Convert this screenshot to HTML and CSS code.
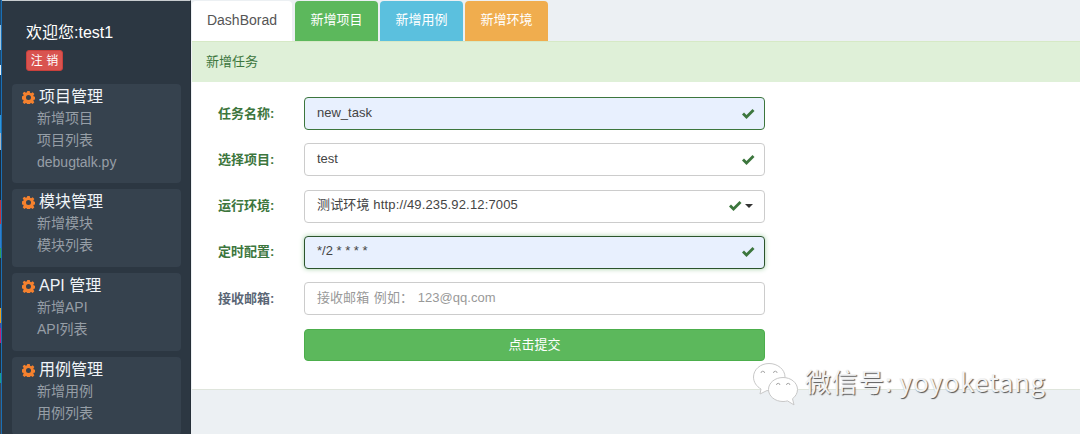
FILE: index.html
```html
<!DOCTYPE html>
<html lang="zh">
<head>
<meta charset="utf-8">
<title>新增任务</title>
<link rel="stylesheet" href="styles.css">
</head>
<body>
<div class="app">
  <div class="edge">
    <i class="e1"></i><i class="e2"></i><i class="e3"></i><i class="e4"></i><i class="e5"></i><i class="e6"></i><i class="e7"></i><i class="e8"></i><i class="e9"></i><i class="e10"></i><i class="e11"></i><i class="e12"></i><i class="e13"></i><i class="e14"></i><i class="e15"></i><i class="e16"></i><i class="e17"></i><i class="e18"></i>
  </div>
  <aside class="sidebar">
    <div class="welcome">欢迎您:test1</div>
    <div class="badge-row"><span class="logout">注 销</span></div>
    <section class="group first">
      <h3><svg class="gear" viewBox="0 0 14 14"><use href="#gear"/></svg>项目管理</h3>
      <a>新增项目</a><a>项目列表</a><a>debugtalk.py</a>
    </section>
    <section class="group">
      <h3><svg class="gear" viewBox="0 0 14 14"><use href="#gear"/></svg>模块管理</h3>
      <a>新增模块</a><a>模块列表</a>
    </section>
    <section class="group">
      <h3><svg class="gear" viewBox="0 0 14 14"><use href="#gear"/></svg>API 管理</h3>
      <a>新增API</a><a>API列表</a>
    </section>
    <section class="group">
      <h3><svg class="gear" viewBox="0 0 14 14"><use href="#gear"/></svg>用例管理</h3>
      <a>新增用例</a><a>用例列表</a>
    </section>
  </aside>
  <main class="main">
    <nav class="tabs">
      <a class="tab dash">DashBorad</a>
      <a class="tab green">新增项目</a>
      <a class="tab blue">新增用例</a>
      <a class="tab orange">新增环境</a>
    </nav>
    <div class="panel">
      <div class="panel-head">新增任务</div>
      <form class="form">
        <div class="row">
          <label class="ok">任务名称:</label>
          <div class="field filled focus"><span class="val">new_task</span><svg class="check" viewBox="0 0 14 12"><use href="#check"/></svg></div>
        </div>
        <div class="row">
          <label class="ok">选择项目:</label>
          <div class="field"><span class="val">test</span><svg class="check" viewBox="0 0 14 12"><use href="#check"/></svg></div>
        </div>
        <div class="row">
          <label class="ok">运行环境:</label>
          <div class="field"><span class="val wide">测试环境 http://49.235.92.12:7005</span><svg class="check near" viewBox="0 0 14 12"><use href="#check"/></svg><span class="caret"></span></div>
        </div>
        <div class="row">
          <label class="ok">定时配置:</label>
          <div class="field filled glow"><span class="val">*/2 * * * *</span><svg class="check" viewBox="0 0 14 12"><use href="#check"/></svg></div>
        </div>
        <div class="row">
          <label class="plain">接收邮箱:</label>
          <div class="field empty"><span class="val">接收邮箱 例如： 123@qq.com</span></div>
        </div>
        <div class="row">
          <span class="spacer"></span>
          <button class="submit" type="button">点击提交</button>
        </div>
      </form>
    </div>
  </main>
</div>
<div class="mark">
  <svg class="wechat" viewBox="0 0 50 44">
    <path class="bub" d="M17 1.500C8.500 1.500 1.500 7.500 1.500 15c0 5 3 9.500 7.500 12l-1 5 7-3.500c1 .2 1.500.2 2 .2 9 0 16-6 16-13.700S25.500 1.500 17 1.500z"/>
    <path class="bub" d="M31 15.500c-8 0-14.500 5.300-14.500 12S23 39.500 31 39.500c1.500 0 3-.2 4.500-.6l6.500 4-1.500-6.200c3-2.200 5-5.500 5-9.200 0-6.700-6.500-12-14.500-12z"/>
    <path class="eye" d="M9 11a1.800 1.800 0 1 1 3.600 0M21.500 11a1.800 1.800 0 1 1 3.600 0M24.500 23a1.700 1.700 0 1 1 3.400 0M34.500 23a1.700 1.700 0 1 1 3.400 0"/>
  </svg>
  <span class="mark-text">微信号: yoyoketang</span>
</div>
<svg class="defs" width="0" height="0">
  <defs>
    <path id="gear" fill-rule="evenodd" d="M5.700 0h2.600l.4 2 1.100.5 1.700-1.100 1.800 1.800-1.100 1.700.5 1.100 2 .4v2.600l-2 .4-.5 1.100 1.100 1.700-1.800 1.800-1.700-1.100-1.100.5-.4 2H5.700l-.4-2-1.100-.5-1.700 1.100-1.800-1.800 1.100-1.700-.5-1.100-2-.4V5.700l2-.4.5-1.100-1.100-1.700 1.800-1.800 1.700 1.100 1.100-.5zM7 4.300a2.700 2.700 0 1 0 0 5.400 2.700 2.700 0 0 0 0-5.400z"/>
    <path id="check" d="M1 6.500l2-2 2.500 2.500L11.500 1 13.500 3 5.500 11z"/>
  </defs>
</svg>
</body>
</html>
```
FILE: styles.css
```css
* { box-sizing: border-box; }
html, body { margin: 0; padding: 0; height: 434px; overflow: hidden; }
body { font-family: "Liberation Sans", "Noto Sans CJK SC", sans-serif; font-size: 13px; color: #333; background: #ecf0f3; }
.app { display: flex; height: 434px; }
.edge { width: 2px; display: flex; flex-direction: column; border-right: 1px solid #1a6fb5; flex: none; }
.edge i { display: block; }
.e1 { height: 25px; background: #1d4a70; }
.e2 { height: 25px; background: #9fc4de; }
.e3 { height: 15px; background: #1d4a70; }
.e4 { height: 10px; background: #e4ecf2; }
.e5 { height: 40px; background: #163a5c; }
.e6 { height: 18px; background: #2e97dc; }
.e7 { height: 17px; background: #a8b4bf; }
.e8 { height: 50px; background: #1c2b3a; }
.e9 { height: 24px; background: #c4333c; }
.e10 { height: 24px; background: #2f7fd0; }
.e11 { height: 10px; background: #2e9e58; }
.e12 { height: 50px; background: #24303c; }
.e13 { height: 15px; background: #e8a020; }
.e14 { height: 5px; background: #4a4aa0; }
.e15 { height: 15px; background: #c0207a; }
.e16 { height: 30px; background: #22303c; }
.e17 { height: 10px; background: #17a08c; }
.e18 { height: 51px; background: #3a4654; }
.sidebar { width: 189px; flex: none; background: #2c3742; padding: 0 9px 0 10px; overflow: hidden; border-top: 1px solid #c8cccf; border-right: 1px solid #262f38; }
.welcome { color: #fff; font-size: 16px; line-height: 20px; padding: 22px 0 0 14px; }
.badge-row { padding: 7px 0 0 14px; height: 41px; }
.logout { display: inline-block; width: 37px; height: 21px; line-height: 20px; text-align: center; background: #d9534f; border: 1px solid #c9403c; border-radius: 3px; color: #fff; font-size: 12px; }
.group { background: #36424e; border-radius: 4px; height: 78px; margin-bottom: 6px; padding: 3px 0 0 10px; }
.group.first { height: 99px; }
.group h3 { margin: 0; font-weight: 400; font-size: 16px; line-height: 20px; color: #f0f4f8; display: flex; align-items: center; }
.gear { width: 13px; height: 13px; fill: #f5812e; margin-right: 4px; flex: none; }
.group a { display: block; margin-left: 15px; color: #969ea6; font-size: 14px; line-height: 22px; }
.main { flex: 1; min-width: 0; display: flex; flex-direction: column; padding-left: 1px; }
.tabs { display: flex; height: 41px; padding-top: 1px; gap: 2px; flex: none; }
.tab { display: block; height: 40px; line-height: 38px; text-align: center; border-radius: 4px 4px 0 0; font-size: 13px; color: #fff; }
.dash { width: 100px; background: #fff; color: #555; font-size: 14px; margin-right: 1px; }
.green { width: 83px; background: #5cb85c; }
.blue { width: 83px; background: #5bc0de; }
.orange { width: 83px; background: #f0ad4e; }
.panel { height: 349px; background: #fff; border-bottom: 1px solid #dfe5dc; flex: none; }
.panel-head { height: 41px; line-height: 40px; background: #dff0d8; border-top: 1px solid #d6e9c6; padding-left: 14px; color: #3c763d; font-size: 13px; }
.form { padding: 15px 0 0; display: flex; flex-direction: column; gap: 13.33px; }
.row { display: flex; align-items: center; }
.row label, .spacer { width: 112px; flex: none; }
.row label { text-align: left; padding: 0 0 3px 26px; font-weight: 700; font-size: 13px; }
.row label.ok { color: #3c763d; }
.row label.plain { color: #5a6675; }
.field { width: 461px; height: 33px; border: 1px solid #ccc; border-radius: 4px; background: #fff; padding: 0 12px; font-size: 13px; color: #444; display: flex; align-items: center; }
.val { line-height: 18px; padding-bottom: 2px; }
.wide { letter-spacing: .15px; }
.field.filled { background: #e8f0fe; }
.field.focus { border-color: #3c763d; }
.field.glow { border-color: #2b542c; box-shadow: 0 0 5px #a5cfa6; }
.field.empty { color: #999; word-spacing: 1px; letter-spacing: .05px; }
.check { width: 14px; height: 12px; fill: #3c763d; margin-left: auto; margin-right: -3px; flex: none; }
.check.near { margin-right: 3px; }
.caret { width: 0; height: 0; border-left: 4px solid transparent; border-right: 4px solid transparent; border-top: 4px solid #333; margin-right: -1px; flex: none; }
.submit { width: 461px; height: 32px; border: 1px solid #4cae4c; border-radius: 4px; background: #5cb85c; color: #fff; font: 13px "Liberation Sans", "Noto Sans CJK SC", sans-serif; padding: 0 0 2px; }
.mark { position: absolute; left: 752px; top: 362px; display: flex; align-items: center; gap: 3px; }
.mark-text { font-family: "Noto Sans CJK SC", sans-serif; color: #f2f3f4; font-size: 26px; line-height: 40px; margin-top: -6px; letter-spacing: .6px; text-shadow: 1px 1px 1px #555; }
.wechat { width: 50px; height: 44px; }
.bub { fill: #fff; stroke: #c8c8c8; stroke-width: 1; }
.eye { fill: none; stroke: #aaa; stroke-width: 1; }
.defs { position: absolute; }
```
